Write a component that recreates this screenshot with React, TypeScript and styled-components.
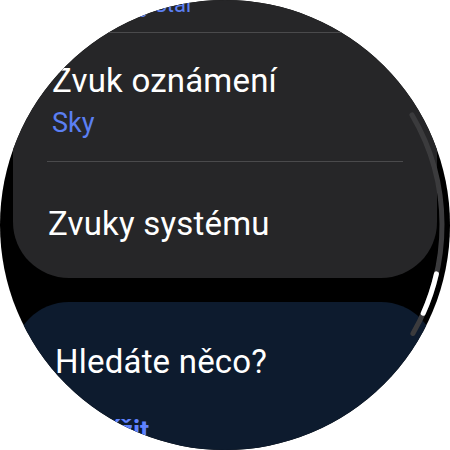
import React from "react";
import styled, { createGlobalStyle } from "styled-components";

const GlobalStyle = createGlobalStyle`
  body {
    margin: 0;
    background: #ffffff;
    font-family: Roboto, "Noto Sans", sans-serif;
  }
`;

const Watch = styled.div`
  position: relative;
  width: 450px;
  height: 450px;
  border-radius: 50%;
  overflow: hidden;
  background: #000000;
`;

const List = styled.div`
  display: flex;
  flex-direction: column;
  gap: 24px;
  margin-top: -84px;
  padding: 0 13px;
`;

const Card = styled.div<{ $tone?: "gray" | "navy" }>`
  display: flex;
  flex-direction: column;
  background: ${(p) => (p.$tone === "navy" ? "#0d1b2e" : "#262628")};
  border-radius: 56px;
`;

const Item = styled.div<{ $inset?: number; $bottom?: number }>`
  display: flex;
  flex-direction: column;
  justify-content: center;
  box-sizing: border-box;
  min-height: 116px;
  padding: 28px 0 ${(p) => p.$bottom ?? 21}px ${(p) => p.$inset ?? 39}px;
`;

const Title = styled.div`
  color: #ffffff;
  font-size: 33px;
  line-height: 40px;
  letter-spacing: 0.2px;
  white-space: nowrap;
`;

const Subtitle = styled.div<{ $small?: boolean }>`
  margin-top: 5px;
  color: #5b7ff2;
  font-size: ${(p) => (p.$small ? 22 : 27)}px;
  line-height: ${(p) => (p.$small ? 28 : 34)}px;
  white-space: nowrap;
`;

const Divider = styled.div`
  height: 1px;
  margin: 0 34px;
  background: #4a4a4c;
`;

const Prompt = styled.div`
  display: flex;
  flex-direction: column;
  padding: 40px 0 80px 42px;
`;

const Link = styled.div`
  margin-top: 32px;
  color: #5f82ff;
  font-size: 27px;
  font-weight: 700;
  line-height: 34px;
`;

const Scroll = styled.svg`
  position: absolute;
  inset: 0;
  pointer-events: none;
`;

// arc point on the watch rim, angle in degrees (0 = right, clockwise)
const pt = (deg: number, r = 217) => {
  const a = (deg * Math.PI) / 180;
  return `${225 + r * Math.cos(a)} ${225 + r * Math.sin(a)}`;
};

const arc = (from: number, to: number) =>
  `M ${pt(from)} A 217 217 0 0 1 ${pt(to)}`;

const ScrollIndicator = () => (
  <Scroll width="450" height="450" viewBox="0 0 450 450">
    <path d={arc(-30.5, 30)} stroke="#3b3b3d" strokeWidth="5" fill="none" strokeLinecap="round" />
    <path d={arc(13, 24)} stroke="#ffffff" strokeWidth="5" fill="none" strokeLinecap="round" />
  </Scroll>
);

const App = () => {
  return (
    <>
      <GlobalStyle />
      <Watch>
        <List>
          <Card>
            <Item $inset={48} $bottom={12}>
              <Title>Vyzváněcí tón</Title>
              <Subtitle $small>Shooting Star</Subtitle>
            </Item>
            <Divider />
            <Item>
              <Title>Zvuk oznámení</Title>
              <Subtitle>Sky</Subtitle>
            </Item>
            <Divider />
            <Item $inset={35}>
              <Title>Zvuky systému</Title>
            </Item>
          </Card>
          <Card $tone="navy">
            <Prompt>
              <Title>Hledáte něco?</Title>
              <Link>Přiblížit</Link>
            </Prompt>
          </Card>
        </List>
        <ScrollIndicator />
      </Watch>
    </>
  );
};

export default App;
